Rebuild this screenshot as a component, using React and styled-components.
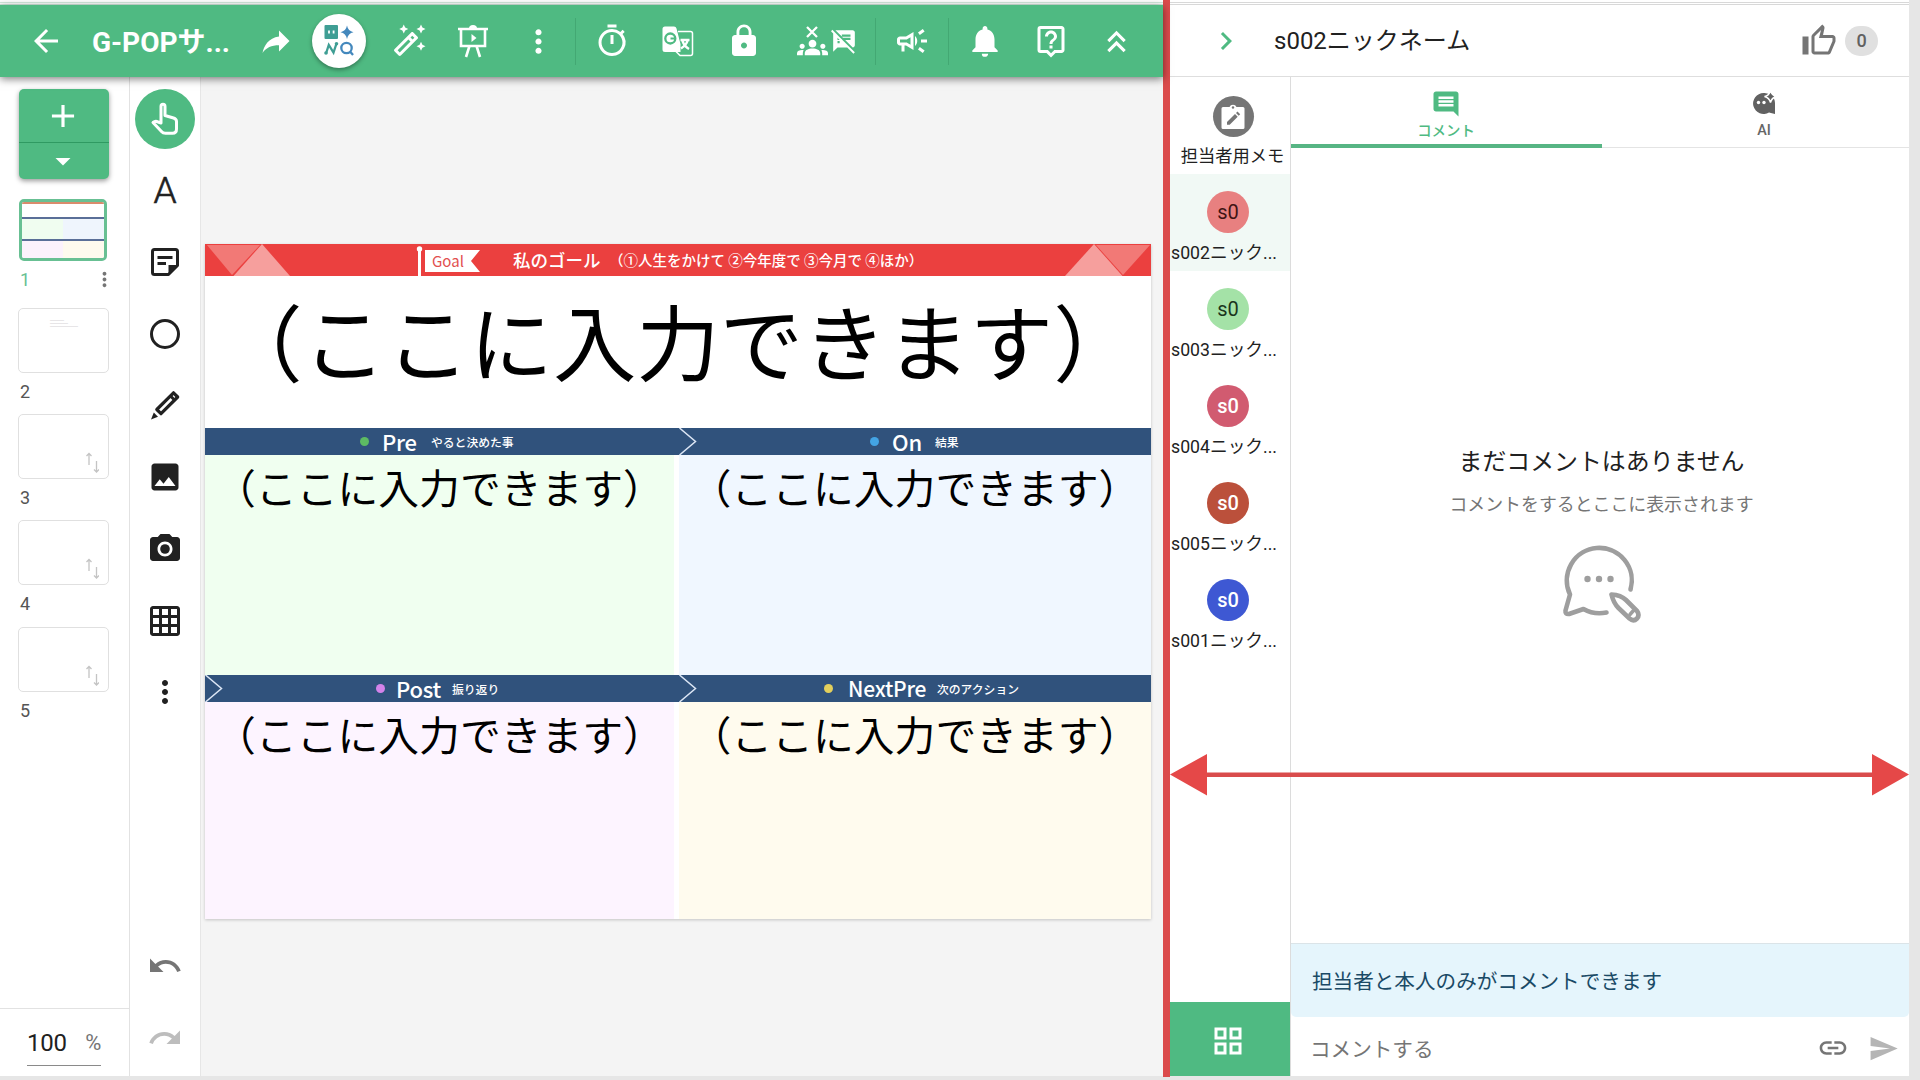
import React from "react";
import styled, { createGlobalStyle } from "styled-components";
import {
  MdArrowBack, MdReply, MdOutlineAutoFixHigh, MdMoreVert, MdOutlineTimer, MdLock,
  MdGroups, MdSpeakerNotesOff, MdOutlineCampaign, MdNotifications, MdOutlineLiveHelp,
  MdKeyboardDoubleArrowUp, MdImage, MdCameraAlt, MdGridOn, MdUndo, MdRedo, MdArrowDropDown,
  MdAdd, MdInsertLink, MdSend, MdComment, MdOutlineGridView, MdChevronRight,
} from "react-icons/md";

const GREEN = "#4fba82";
const UI = `Roboto, "Noto Sans CJK JP", sans-serif`;
const JP = `"Noto Sans CJK JP", sans-serif`;

const Global = createGlobalStyle`
  * { box-sizing: border-box; }
  html, body { margin: 0; padding: 0; overflow: hidden; }
  body { font-family: ${UI}; color: #212121; }
  svg { display: block; flex: none; }
`;

const Page = styled.div`
  position: relative;
  display: flex;
  width: 1920px;
  height: 1080px;
  overflow: hidden;
  background: #e6e6e6;
`;
const Workspace = styled.div`
  display: flex;
  flex-direction: column;
  width: 1163px;
  height: 1076px;
  background: #fff;
`;
const TopEdge = styled.div`
  flex: none;
  height: 5px;
  background: #fff;
  border-bottom: 1px solid ${(p) => p.$line};
  box-shadow: inset 0 -1px 0 #fff, inset 0 -2px 0 ${(p) => p.$line};
`;
const Header = styled.header`
  position: relative;
  z-index: 2;
  flex: none;
  display: grid;
  grid-template-columns: 92px 156px 56px 70px 69px 59px 73px 1px 72px 60px 71px 96px 1px 72px 1px 72px 60px 71px;
  height: 72px;
  align-items: center;
  justify-items: center;
  background: ${GREEN};
  color: #fff;
  box-shadow: 0 2px 8px rgba(0, 0, 0, 0.5);
`;
const Title = styled.div`
  justify-self: start;
  padding-top: 4px;
  font-size: 28px;
  line-height: 40px;
  font-weight: 700;
  white-space: nowrap;
`;
const HeaderRule = styled.div`
  width: 1px;
  height: 47px;
  background: #43a873;
`;
const Flipped = styled.span`
  transform: scaleX(-1);
`;
const RoundButton = styled.div`
  display: grid;
  place-items: center;
  width: 54px;
  height: 54px;
  border-radius: 50%;
  background: #fff;
  box-shadow: 0 2px 4px rgba(0, 0, 0, 0.35);
`;
const IconPair = styled.div`
  display: flex;
  align-items: center;
  gap: 4px;
`;
const IconStack = styled.div`
  display: flex;
  flex-direction: column;
  align-items: center;
  width: 30px;
  height: 34px;
  margin-top: 3px;
`;
const GroupsBox = styled.span`
  margin-top: -6px;
`;

const Body = styled.div`
  flex: 1;
  display: flex;
  min-height: 0;
`;
const PageColumn = styled.aside`
  display: flex;
  flex-direction: column;
  width: 130px;
  border-right: 1px solid #e2e2e2;
  background: #fff;
`;
const PageList = styled.div`
  flex: 1;
  padding: 12px 0 0 18px;
`;
const AddButton = styled.div`
  width: 90px;
  height: 90px;
  margin-left: 1px;
  border-radius: 5px;
  overflow: hidden;
  background: ${GREEN};
  color: #fff;
  box-shadow: 0 2px 5px rgba(0, 0, 0, 0.4);
`;
const AddHalf = styled.div`
  display: flex;
  align-items: center;
  justify-content: center;
  height: ${(p) => p.$h}px;
  padding-right: 2px;
  border-bottom: ${(p) => (p.$rule ? "1px solid #2f9a62" : "0")};
`;
const ActiveThumb = styled.div`
  display: flex;
  flex-direction: column;
  width: 88px;
  height: 62px;
  margin: 20px 0 0 1px;
  border: 3px solid #68c093;
  border-radius: 5px;
  background: #fff;
  overflow: hidden;
`;
const MiniBar = styled.div`
  height: 2px;
  background: ${(p) => p.$c};
`;
const MiniRow = styled.div`
  display: flex;
  height: ${(p) => p.$h}px;
`;
const MiniCell = styled.div`
  flex: 1;
  background: ${(p) => p.$c};
`;
const Thumb = styled.div`
  display: flex;
  justify-content: flex-end;
  align-items: flex-end;
  width: 91px;
  height: 65px;
  border: 1px solid #e0e0e0;
  border-radius: 5px;
  padding: 0 9px 4px 0;
`;
const MiniText = styled.div`
  width: 49px;
  height: 48px;
  font-size: 2px;
  line-height: 3px;
  color: #999;
`;
const ThumbLabel = styled.div`
  display: flex;
  justify-content: space-between;
  align-items: center;
  width: 98px;
  height: ${(p) => p.$h}px;
  padding: 0 0 ${(p) => (p.$active ? 11 : 5)}px 2px;
  font-size: 18px;
  color: ${(p) => (p.$active ? "#68c093" : "#555")};
`;
const ZoomBox = styled.div`
  flex: none;
  height: 68px;
  border-top: 1px solid #e2e2e2;
  padding: 17px 0 0 27px;
`;
const ZoomField = styled.div`
  display: flex;
  justify-content: space-between;
  width: 74px;
  height: 40px;
  border-bottom: 1px solid #8a8a8a;
  font-size: 24px;
  line-height: 34px;
  letter-spacing: -0.3px;
`;
const Percent = styled.span`
  font-size: 22px;
  color: #757575;
`;

const ToolColumn = styled.nav`
  display: flex;
  flex-direction: column;
  align-items: center;
  width: 71px;
  padding-top: 6px;
  background: #fff;
  border-right: 1px solid #e6e6e6;
  color: #212121;
`;
const Tool = styled.div`
  display: grid;
  place-items: center;
  flex: none;
  width: 60px;
  height: 71.7px;
  color: ${(p) => p.$color || "#212121"};
`;
const ActiveTool = styled.div`
  display: grid;
  place-items: center;
  width: 60px;
  height: 60px;
  border-radius: 50%;
  background: ${GREEN};
`;
const Letter = styled.span`
  font-size: 37px;
  line-height: 44px;
  font-weight: 300;
  -webkit-text-stroke: 0.6px #212121;
`;
const Ring = styled.div`
  width: 30px;
  height: 30px;
  border: 3px solid #212121;
  border-radius: 50%;
`;
const Spacer = styled.div`
  flex: 1;
`;
const History = styled.div`
  margin-bottom: 2px;
`;

const Canvas = styled.main`
  flex: 1;
  padding: 167px 0 0 4px;
  background: #f4f4f4;
`;
const Slide = styled.section`
  width: 946px;
  height: 675px;
  background: #fff;
  box-shadow: 0 1px 3px rgba(0, 0, 0, 0.2);
  font-family: ${JP};
`;
const GoalBar = styled.div`
  display: grid;
  grid-template-columns: 85px 123px 100px 105px 447px 86px;
  align-items: center;
  height: 32px;
  background: #eb403f;
  color: #fff;
`;
const Pennant = styled.div`
  position: relative;
  height: 32px;
`;
const PennantText = styled.span`
  position: absolute;
  left: 19px;
  top: 5px;
  font-size: 15px;
  line-height: 24px;
  color: #e2504f;
`;
const GoalTitle = styled.div`
  font-size: 17.5px;
  line-height: 30px;
  font-weight: 500;
  white-space: nowrap;
`;
const GoalHint = styled.div`
  font-size: 14.5px;
  line-height: 30px;
  font-weight: 500;
  margin-left: -9px;
  white-space: nowrap;
`;
const BigText = styled.div`
  height: 152px;
  padding-top: 3px;
  font-size: 83.4px;
  line-height: 120px;
  text-align: center;
  color: #000;
  white-space: nowrap;
`;
const SectionRow = styled.div`
  display: flex;
  height: 27px;
  background: #30527c;
`;
const SectionHead = styled.div`
  display: flex;
  align-items: center;
  width: ${(p) => p.$w}px;
  color: #fff;
`;
const ArrowSlot = styled.div`
  width: ${(p) => p.$w}px;
`;
const Dot = styled.span`
  width: 9px;
  height: 9px;
  border-radius: 50%;
  background: ${(p) => p.$c};
`;
const HeadName = styled.span`
  width: ${(p) => p.$w}px;
  height: 28px;
  margin-left: ${(p) => p.$gap || 13}px;
  font-size: ${(p) => p.$size || 22}px;
  line-height: 27px;
  font-weight: 500;
  letter-spacing: -0.2px;
  white-space: nowrap;
`;
const HeadSub = styled.span`
  height: 25px;
  font-size: 11.8px;
  line-height: 25px;
  font-weight: 500;
  white-space: nowrap;
`;
const CellRow = styled.div`
  display: grid;
  grid-template-columns: 469px 472px;
  gap: 5px;
  height: ${(p) => p.$h}px;
`;
const Cell = styled.div`
  padding-top: 2px;
  background: ${(p) => p.$c};
  font-size: 40.8px;
  line-height: 60px;
  text-align: center;
  color: #000;
  white-space: nowrap;
`;

const Separator = styled.div`
  width: 7px;
  height: 1077px;
  background: #db4b4c;
`;
const SidePanel = styled.section`
  display: flex;
  flex-direction: column;
  width: 739px;
  height: 1076px;
  background: #fff;
  overflow: hidden;
`;
const SideHeader = styled.div`
  flex: none;
  display: grid;
  grid-template-columns: 104px 1fr 44px 33px 31px;
  align-items: center;
  height: 72px;
  border-bottom: 1px solid #dedede;
`;
const Back = styled.div`
  padding-left: 38px;
  color: ${GREEN};
`;
const Nickname = styled.div`
  font-size: 24px;
  line-height: 36px;
  white-space: nowrap;
`;
const Count = styled.div`
  width: 33px;
  height: 30px;
  border-radius: 15px;
  background: #e0e0e0;
  color: #616161;
  font-size: 18px;
  font-weight: 500;
  line-height: 30px;
  text-align: center;
`;
const SideBody = styled.div`
  flex: 1;
  display: flex;
  min-height: 0;
`;
const Members = styled.div`
  display: flex;
  flex-direction: column;
  width: 121px;
  border-right: 1px solid #dcdcdc;
`;
const Memo = styled.div`
  flex: none;
  display: flex;
  flex-direction: column;
  align-items: center;
  height: 97px;
  padding: 19px 0 0 5px;
  font-size: 17.3px;
  line-height: 26px;
  white-space: nowrap;
`;
const MemoIcon = styled.div`
  display: grid;
  place-items: center;
  width: 41px;
  height: 41px;
  margin: 0 0 6px 1px;
  border-radius: 50%;
  background: #757575;
`;
const Member = styled.div`
  flex: none;
  height: 97px;
  padding: 17px 5px 0 1px;
  background: ${(p) => (p.$active ? "#f1f9f5" : "transparent")};
`;
const Avatar = styled.div`
  width: 42px;
  height: 42px;
  margin: 0 0 7px 36px;
  border-radius: 50%;
  background: ${(p) => p.$bg};
  color: ${(p) => p.$fg};
  font-size: 20px;
  font-weight: ${(p) => (p.$fg === "#fff" ? 500 : 400)};
  line-height: 42px;
  text-align: center;
`;
const MemberName = styled.div`
  width: 112px;
  font-size: 17.7px;
  line-height: 26px;
  white-space: nowrap;
`;
const GridButton = styled.div`
  display: grid;
  place-items: center;
  width: 120px;
  height: 74px;
  padding: 3px 4px 0 0;
  background: ${GREEN};
  color: #fff;
`;
const Chat = styled.div`
  flex: 1;
  display: flex;
  flex-direction: column;
  min-width: 0;
`;
const Tabs = styled.div`
  flex: none;
  display: grid;
  grid-template-columns: 311px 307px;
  height: 71px;
  border-bottom: 1px solid #e4e4e4;
`;
const Tab = styled.div`
  display: flex;
  flex-direction: column;
  align-items: center;
  gap: ${(p) => (p.$active ? 1 : 4)}px;
  height: 71px;
  padding: ${(p) => (p.$active ? "12px 1px 0 0" : "14px 0 0 17px")};
  border-bottom: ${(p) => (p.$active ? `4px solid #57b584` : "0")};
  color: ${(p) => (p.$active ? GREEN : "#666")};
  font-size: 14.4px;
  line-height: 24px;
  font-weight: 500;
`;
const Empty = styled.div`
  flex: 1;
  display: flex;
  flex-direction: column;
  align-items: center;
  padding: 296px 0 0 3px;
`;
const EmptyTitle = styled.div`
  font-size: 23.9px;
  line-height: 36px;
  white-space: nowrap;
`;
const EmptySub = styled.div`
  margin: 10px 0 24px;
  font-size: 17.9px;
  line-height: 30px;
  color: #757575;
  white-space: nowrap;
`;
const Notice = styled.div`
  flex: none;
  display: flex;
  align-items: center;
  height: 74px;
  padding: 0 0 2px 21px;
  border-top: 1px solid #dbe4e8;
  border-radius: 0 0 5px 5px;
  background: #e5f5fc;
  color: #1a4a66;
  font-size: 20.6px;
`;
const Compose = styled.div`
  flex: none;
  display: grid;
  grid-template-columns: 1fr 51px 39px;
  align-items: center;
  height: 59px;
  padding: 3px 2px 0 19px;
  color: #757575;
  font-size: 20.6px;
`;
const SendBox = styled.span`
  color: #b5b5b5;
`;
const SpanArrow = styled.svg`
  position: absolute;
  left: 1170px;
  top: 753px;
`;

const AppsGlyph = () => (
  <svg width="30" height="34" viewBox="0 0 30 34" fill="none">
    <rect x="0.5" y="1" width="13.5" height="14" rx="1" fill="#3f9e94" />
    <path d="M5 6.5v3M9.6 6.5v3" stroke="#fff" strokeWidth="1.8" />
    <path d="M23 1.5q1 5.500 6.500 6.700q-5.500 1.200-6.500 6.800q-1-5.600-6.500-6.800q5.500-1.200 6.500-6.700z" fill="#4488bd" />
    <path d="M2 29.500l2.800-8.500 4.700 7.500 3-9" stroke="#3f9e94" strokeWidth="2.300" />
    <circle cx="2" cy="29" r="1.800" fill="#3f9e94" />
    <circle cx="12.500" cy="19.800" r="1.800" fill="#3f9e94" />
    <circle cx="22.500" cy="24" r="5.200" stroke="#4488bd" strokeWidth="2.300" />
    <path d="M26 27.500l3 3.500" stroke="#4488bd" strokeWidth="2.300" />
  </svg>
);
const PresentGlyph = () => (
  <svg width="32" height="34" viewBox="0 0 32 34" fill="none" stroke="#fff" strokeWidth="2.600">
    <path d="M1 5h30M4 5v17h24V5M12.500 22l-3.500 11M19.500 22l3.500 11" />
    <path d="M12 4.500a4 3.500 0 0 1 8 0z" fill="#fff" stroke="none" />
    <path d="M14.500 10v8l5-4z" fill="#fff" stroke="none" />
  </svg>
);
const TranslateGlyph = () => (
  <svg width="32" height="32" viewBox="0 0 32 32" fill="none">
    <path d="M16 6.500h12.500q2 0 2 2v20q0 2-2 2H18l-4-4" stroke="#fff" strokeWidth="1.500" />
    <path d="M3 1.500h9q2 0 2.500 2L18.500 19v8H3q-2.500 0-2.500-2.500V4q0-2.500 2.500-2.500z" fill="#fff" />
    <circle cx="8.300" cy="13.500" r="5" stroke={GREEN} strokeWidth="2.300" />
    <path d="M8.500 13.500h4" stroke={GREEN} strokeWidth="2" />
    <path d="M18.500 15h9M26 14.500q-1.500 5.500-7 9M20.500 16q2 5.500 6.500 8" stroke="#fff" strokeWidth="2.400" />
  </svg>
);
const CrossGlyph = () => (
  <svg width="12" height="12" viewBox="0 0 12 12" stroke="#fff" strokeWidth="2.300">
    <path d="M1 1l10 10M11 1L1 11" />
  </svg>
);
const HandGlyph = () => (
  <svg width="30" height="34" viewBox="0 0 30 34" fill="none" stroke="#fff" strokeWidth="3" strokeLinejoin="round">
    <path d="M11 21V4.500Q11 2.300 13 2.300T15 4.500V13.500L23.500 16Q26.500 17 26.500 19.500V27Q26.500 31.300 22.500 31.300H15.500Q13 31.300 11.500 29.500L3 20.500Q5.500 18.500 8 20z" />
  </svg>
);
const NoteGlyph = () => (
  <svg width="28" height="28" viewBox="0 0 28 28">
    <path d="M3.500 1.500h21q2 0 2 2V17.500L17.500 26.500h-14q-2 0-2-2v-21q0-2 2-2z" fill="none" stroke="#212121" strokeWidth="3" strokeLinejoin="round" />
    <path d="M27 17h-9.500v10z" fill="#212121" />
    <path d="M6.500 9.500h15M6.500 15.500h8.500" stroke="#212121" strokeWidth="2.800" />
  </svg>
);
const PencilGlyph = () => (
  <svg width="30" height="32" viewBox="0 0 30 32" fill="none" stroke="#212121">
    <path d="M6.800 19.500L23.500 2.800l4.200 4.200L11 23.700z" strokeWidth="3.200" strokeLinejoin="round" />
    <path d="M20.500 6l4 4" strokeWidth="3" />
    <path d="M3.800 22.500L1 29.500l7-2.800z" fill="#212121" stroke="none" />
  </svg>
);
const SwapGlyph = () => (
  <svg width="14" height="22" viewBox="0 0 14 22" fill="none" stroke="#c4c4c4" strokeWidth="1.300">
    <path d="M4 13V2M1.500 4L4 1.500 6.500 4M11.500 9v10M9 17.500l2.500 2.500 2.500-2.500" />
  </svg>
);
const ThumbUpGlyph = () => (
  <svg width="36" height="36" viewBox="0 0 24 24" fill="#757575">
    <path d="M9 21h9c.83 0 1.540-.5 1.840-1.220l3.020-7.050c.09-.23.140-.47.140-.73v-2c0-1.100-.9-2-2-2h-6.310l.95-4.570.03-.32c0-.41-.17-.79-.44-1.060L14.170 1 7.580 7.590C7.220 7.950 7 8.450 7 9v10c0 1.100.9 2 2 2zM9 9l4.340-4.340L12 10h9v2l-3 7H9V9zM1 9h4v12H1z" />
  </svg>
);
const ClipboardGlyph = () => (
  <svg width="24" height="26" viewBox="0 0 24 26">
    <path d="M2 3h6.500a3.800 3.800 0 0 1 7 0H22q1.500 0 1.500 1.500v19q0 1.500-1.500 1.500H2q-1.500 0-1.500-1.500v-19Q.5 3 2 3z" fill="#fff" />
    <circle cx="12" cy="3.500" r="1.200" fill="#757575" />
    <path d="M6 18l8-8 2.700 2.700-8 8H6zM15 9l1.500-1.500 2.700 2.700-1.500 1.500z" fill="#757575" />
  </svg>
);
const AiGlyph = () => (
  <svg width="24" height="24" viewBox="0 0 24 24">
    <path d="M11.500 2A10.500 10.500 0 1 0 17 21.500L23 23V12A10.500 10.500 0 0 0 11.500 2z" fill="#616161" />
    <path d="M18.500-.5q1.200 5 6 6q-4.800 1.200-6 6q-1.200-4.800-6-6q4.800-1 6-6z" fill="#616161" stroke="#fff" strokeWidth="1.500" />
    <circle cx="6.500" cy="11.500" r="1.700" fill="#fff" />
    <circle cx="12" cy="11.500" r="1.700" fill="#fff" />
  </svg>
);
const EmptyGlyph = () => (
  <svg width="80" height="80" viewBox="0 0 80 80" fill="none" stroke="#9e9e9e" strokeWidth="4.600" strokeLinecap="round" strokeLinejoin="round">
    <path d="M68.500 45.500A32.500 32.500 0 1 0 8 50.500L3.500 66.500Q3 70.500 7 70L21.500 65Q32 71 44.500 68.500" />
    <path d="M49.500 50.500Q59 51 64 56L75 67Q78 71 75 74.500Q71.500 78 67.500 74.500L56.500 64Q51.500 59 49.500 50.500z" />
    <path d="M68 70.500l3.500-4" strokeWidth="3.500" />
    <g fill="#9e9e9e" stroke="none">
      <circle cx="25.500" cy="35" r="3.200" />
      <circle cx="37" cy="35" r="3.200" />
      <circle cx="48.500" cy="35" r="3.200" />
    </g>
  </svg>
);
const ChevronMark = () => (
  <svg width="18" height="27" viewBox="0 0 18 27" fill="none" stroke="#dce6f5" strokeWidth="1.500">
    <path d="M0.500 0L16.500 13.500 0.500 27" />
  </svg>
);

const PROMPT = "（ここに入力できます）";

const members = [
  { name: "s002ニック...", bg: "#e88080", fg: "#3f1414", active: true },
  { name: "s003ニック...", bg: "#a4e2a7", fg: "#1a351c" },
  { name: "s004ニック...", bg: "#d15b70", fg: "#fff" },
  { name: "s005ニック...", bg: "#bb503b", fg: "#fff" },
  { name: "s001ニック...", bg: "#3e58d3", fg: "#fff" },
];

function Section({ lead, width, gap, size, color, name, nameWidth, sub, mark }) {
  return (
    <SectionHead $w={width}>
      <ArrowSlot $w={lead}>{mark && <ChevronMark />}</ArrowSlot>
      <Dot $c={color} />
      <HeadName $w={nameWidth} $gap={gap} $size={size}>{name}</HeadName>
      <HeadSub>{sub}</HeadSub>
    </SectionHead>
  );
}

export default function App() {
  return (
    <Page>
      <Global />
      <Workspace>
        <TopEdge $line="#d5ebdf" />
        <Header>
          <MdArrowBack size={36} />
          <Title>G-POPサ...</Title>
          <Flipped><MdReply size={36} /></Flipped>
          <RoundButton><AppsGlyph /></RoundButton>
          <MdOutlineAutoFixHigh size={36} />
          <PresentGlyph />
          <MdMoreVert size={37} />
          <HeaderRule />
          <MdOutlineTimer size={36} />
          <TranslateGlyph />
          <MdLock size={36} />
          <IconPair>
            <IconStack>
              <CrossGlyph />
              <GroupsBox><MdGroups size={31} /></GroupsBox>
            </IconStack>
            <MdSpeakerNotesOff size={26} />
          </IconPair>
          <HeaderRule />
          <MdOutlineCampaign size={36} />
          <HeaderRule />
          <MdNotifications size={38} />
          <MdOutlineLiveHelp size={36} />
          <MdKeyboardDoubleArrowUp size={37} />
        </Header>
        <Body>
          <PageColumn>
            <PageList>
              <AddButton>
                <AddHalf $h={54} $rule><MdAdd size={38} /></AddHalf>
                <AddHalf $h={36}><MdArrowDropDown size={36} /></AddHalf>
              </AddButton>
              <ActiveThumb>
                <MiniBar $c="#d98b6c" />
                <MiniRow $h={14} />
                <MiniBar $c="#5a6f98" />
                <MiniRow $h={20}><MiniCell $c="#f0fdf0" /><MiniCell $c="#eff5fd" /></MiniRow>
                <MiniBar $c="#5a6f98" />
                <MiniRow $h={18}><MiniCell $c="#fcf2fc" /><MiniCell $c="#fefaee" /></MiniRow>
              </ActiveThumb>
              <ThumbLabel $h={47} $active>
                <span>1</span>
                <MdMoreVert size={23} color="#757575" />
              </ThumbLabel>
              <Thumb><MiniText>━━━━━━━<br />━━━━━━━━━<br />━━━━━━━━━━━━━━</MiniText></Thumb>
              <ThumbLabel $h={41}><span>2</span></ThumbLabel>
              <Thumb><SwapGlyph /></Thumb>
              <ThumbLabel $h={41}><span>3</span></ThumbLabel>
              <Thumb><SwapGlyph /></Thumb>
              <ThumbLabel $h={42}><span>4</span></ThumbLabel>
              <Thumb><SwapGlyph /></Thumb>
              <ThumbLabel $h={41}><span>5</span></ThumbLabel>
            </PageList>
            <ZoomBox>
              <ZoomField>100<Percent>%</Percent></ZoomField>
            </ZoomBox>
          </PageColumn>
          <ToolColumn>
            <Tool><ActiveTool><HandGlyph /></ActiveTool></Tool>
            <Tool><Letter>A</Letter></Tool>
            <Tool><NoteGlyph /></Tool>
            <Tool><Ring /></Tool>
            <Tool><PencilGlyph /></Tool>
            <Tool><MdImage size={36} /></Tool>
            <Tool><MdCameraAlt size={36} /></Tool>
            <Tool><MdGridOn size={36} /></Tool>
            <Tool><MdMoreVert size={36} /></Tool>
            <Spacer />
            <History>
              <Tool $color="#757575"><MdUndo size={36} /></Tool>
              <Tool $color="#bdbdbd"><MdRedo size={36} /></Tool>
            </History>
          </ToolColumn>
          <Canvas>
            <Slide>
              <GoalBar>
                <svg width="85" height="32" viewBox="0 0 85 32">
                  <path d="M2 1h53L27 31z" fill="#f27976" />
                  <path d="M57 0L28.500 32H85z" fill="#f69f9d" />
                </svg>
                <div />
                <Pennant>
                  <svg width="70" height="32" viewBox="0 0 70 32">
                    <path d="M5 4h3v28H5zM12 6h55l-9 11 9 11H12z" fill="#fff" />
                    <circle cx="6.500" cy="5" r="2.700" fill="#fff" />
                  </svg>
                  <PennantText>Goal</PennantText>
                </Pennant>
                <GoalTitle>私のゴール</GoalTitle>
                <GoalHint>（①人生をかけて ②今年度で ③今月で ④ほか）</GoalHint>
                <svg width="86" height="32" viewBox="0 0 86 32">
                  <path d="M31 1h54L58 31z" fill="#f27976" />
                  <path d="M29 0L0 32h57.500z" fill="#f69f9d" />
                </svg>
              </GoalBar>
              <BigText>{PROMPT}</BigText>
              <SectionRow>
                <Section width={474} lead={155} color="#5dbb63" name="Pre" nameWidth={49} sub="やると決めた事" />
                <Section width={472} lead={191} color="#43a4e4" name="On" nameWidth={43} sub="結果" mark />
              </SectionRow>
              <CellRow $h={220}>
                <Cell $c="#f0fff0">{PROMPT}</Cell>
                <Cell $c="#f0f7ff">{PROMPT}</Cell>
              </CellRow>
              <SectionRow>
                <Section width={474} lead={171} gap={11} color="#d383ea" name="Post" nameWidth={56} sub="振り返り" mark />
                <Section width={472} lead={145} gap={15} size={21} color="#e3cf5c" name="NextPre" nameWidth={89} sub="次のアクション" mark />
              </SectionRow>
              <CellRow $h={217}>
                <Cell $c="#fdf4ff">{PROMPT}</Cell>
                <Cell $c="#fffbee">{PROMPT}</Cell>
              </CellRow>
            </Slide>
          </Canvas>
        </Body>
      </Workspace>
      <Separator />
      <SidePanel>
        <TopEdge $line="#d8d8d8" />
        <SideHeader>
          <Back><MdChevronRight size={36} /></Back>
          <Nickname>s002ニックネーム</Nickname>
          <ThumbUpGlyph />
          <Count>0</Count>
        </SideHeader>
        <SideBody>
          <Members>
            <Memo>
              <MemoIcon><ClipboardGlyph /></MemoIcon>
              担当者用メモ
            </Memo>
            {members.map((m) => (
              <Member key={m.name} $active={m.active}>
                <Avatar $bg={m.bg} $fg={m.fg}>s0</Avatar>
                <MemberName>{m.name}</MemberName>
              </Member>
            ))}
            <Spacer />
            <GridButton><MdOutlineGridView size={36} /></GridButton>
          </Members>
          <Chat>
            <Tabs>
              <Tab $active><MdComment size={30} />コメント</Tab>
              <Tab><AiGlyph />AI</Tab>
            </Tabs>
            <Empty>
              <EmptyTitle>まだコメントはありません</EmptyTitle>
              <EmptySub>コメントをするとここに表示されます</EmptySub>
              <EmptyGlyph />
            </Empty>
            <Notice>担当者と本人のみがコメントできます</Notice>
            <Compose>
              <span>コメントする</span>
              <MdInsertLink size={32} />
              <SendBox><MdSend size={31} /></SendBox>
            </Compose>
          </Chat>
        </SideBody>
      </SidePanel>
      <SpanArrow width="740" height="44" viewBox="0 0 740 44">
        <path d="M30 19.500h680v4.600H30z" fill="#d94c4c" />
        <path d="M0 21.500L37 1v41.500zM739 21.500L702 1v41.500z" fill="#e54848" />
      </SpanArrow>
    </Page>
  );
}
